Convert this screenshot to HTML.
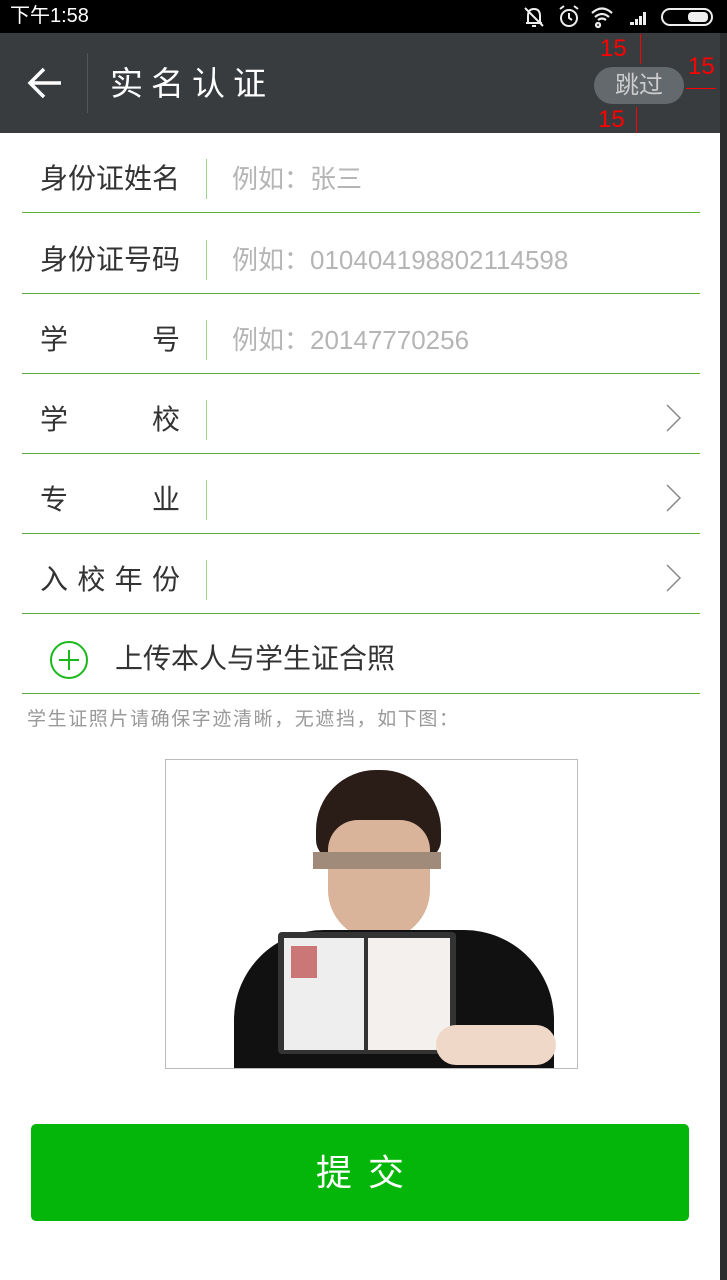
<!DOCTYPE html>
<html><head><meta charset="utf-8"><style>
*{margin:0;padding:0;box-sizing:border-box}
body{width:727px;height:1280px;background:#fff;position:relative;overflow:hidden;font-family:"Liberation Sans","Noto Sans CJK SC",sans-serif}
.abs{position:absolute}
.row{position:absolute;left:22px;width:678px;height:80px;border-bottom:1px solid #5cb03a}
.lab{position:absolute;left:18px;top:6px;line-height:80px;font-size:28px;color:#333;width:140px}
.vl{position:absolute;left:184px;top:26px;width:1px;height:40px;background:#9fd28a}
.ph{position:absolute;left:210px;top:6px;line-height:80px;font-size:26px;color:#b5b5b5}
.chev{position:absolute;right:18px;top:30px;width:16px;height:28px}
</style></head><body>
<div class="abs" style="left:0;top:0;width:727px;height:33px;background:#000"></div>
<div class="abs" style="left:10px;top:2px;color:#fff;font-size:20px;line-height:28px">下午1:58</div>
<svg class="abs" style="left:520px;top:4px" width="65" height="26"><path d="M6 19h16M8 19v-7q0-7 6-7t6 7v7M5 4l18 18M12 22h4" stroke="#eee" stroke-width="2" fill="none"/><circle cx="49" cy="14" r="8" stroke="#eee" stroke-width="2" fill="none"/><path d="M49 9v5l3 2M40 5l4-3M58 5l-4-3" stroke="#eee" stroke-width="2" fill="none"/></svg>
<svg class="abs" style="left:590px;top:5px" width="125" height="24"><path d="M8 18a2 2 0 1 0 .1 0M2 8q10-9 20 0M5 12q7-6 14 0M8 15q4-3 8 0" stroke="#eee" stroke-width="2.2" fill="none"/><path d="M40 20h4v-3h-4zM45 20h3v-6h-3zM49 20h3v-9h-3zM53 20h3v-13h-3z" fill="#eee"/><rect x="72" y="4" width="50" height="16" rx="8" fill="none" stroke="#eee" stroke-width="2"/><rect x="98" y="7" width="20" height="10" rx="4" fill="#eee"/></svg>
<div class="abs" style="left:0;top:33px;width:727px;height:100px;background:#383c3f"></div>
<svg class="abs" style="left:27px;top:66px" width="36" height="34"><path d="M3 17h31M17 3L3 17l14 14" stroke="#fff" stroke-width="3.5" fill="none"/></svg>
<div class="abs" style="left:87px;top:53px;width:1px;height:60px;background:#555"></div>
<div class="abs" style="left:110px;top:62px;color:#fff;font-size:33px;letter-spacing:8px;line-height:44px">实名认证</div>
<div class="abs" style="left:594px;top:67px;width:90px;height:37px;border-radius:19px;background:#64696d;color:#ccc;font-size:24px;text-align:center;line-height:37px">跳过</div>
<div class="abs" style="left:600px;top:34px;color:#f00;font-size:24px;line-height:30px">15</div>
<div class="abs" style="left:598px;top:105px;color:#f00;font-size:24px;line-height:30px">15</div>
<div class="abs" style="left:688px;top:52px;color:#f00;font-size:24px;line-height:30px">15</div>
<div class="abs" style="left:640px;top:34px;width:1px;height:30px;background:#f00"></div>
<div class="abs" style="left:636px;top:107px;width:1px;height:26px;background:#f00"></div>
<div class="abs" style="left:686px;top:88px;width:30px;height:1px;background:#f00"></div>
<div class="abs" style="left:720px;top:33px;width:7px;height:1247px;background:#2b2d2f"></div>

<div class="row" style="top:133px"><div class="lab">身份证姓名</div><div class="vl"></div><div class="ph">例如：张三</div></div>
<div class="row" style="top:214px"><div class="lab">身份证号码</div><div class="vl"></div><div class="ph">例如：010404198802114598</div></div>
<div class="row" style="top:294px"><div class="lab" style="text-align-last:justify">学号</div><div class="vl"></div><div class="ph">例如：20147770256</div></div>
<div class="row" style="top:374px"><div class="lab" style="text-align-last:justify">学校</div><div class="vl"></div><svg class="chev" viewBox="0 0 16 28"><path d="M1 1l13 13L1 27" stroke="#888" stroke-width="1.5" fill="none"/></svg></div>
<div class="row" style="top:454px"><div class="lab" style="text-align-last:justify">专业</div><div class="vl"></div><svg class="chev" viewBox="0 0 16 28"><path d="M1 1l13 13L1 27" stroke="#888" stroke-width="1.5" fill="none"/></svg></div>
<div class="row" style="top:534px"><div class="lab" style="text-align-last:justify">入校年份</div><div class="vl"></div><svg class="chev" viewBox="0 0 16 28"><path d="M1 1l13 13L1 27" stroke="#888" stroke-width="1.5" fill="none"/></svg></div>
<div class="row" style="top:614px"><svg class="abs" style="left:27px;top:26px" width="40" height="40"><circle cx="20" cy="20" r="18" stroke="#1bb81b" stroke-width="2" fill="none"/><path d="M20 10v20M10 20h20" stroke="#1bb81b" stroke-width="2"/></svg><div class="abs" style="left:93px;line-height:90px;top:0px;font-size:28px;color:#333">上传本人与学生证合照</div></div>
<div class="abs" style="left:27px;top:704px;font-size:19px;color:#999;letter-spacing:1.6px">学生证照片请确保字迹清晰，无遮挡，如下图：</div>

<div class="abs" style="left:165px;top:759px;width:413px;height:310px;border:1px solid #bbb;background:#fff;overflow:hidden">
<div class="abs" style="left:150px;top:10px;width:125px;height:90px;background:#2a1d17;border-radius:60px 60px 20px 20px"></div>
<div class="abs" style="left:162px;top:60px;width:102px;height:120px;background:#d9b49a;border-radius:30px 30px 50px 50px"></div>
<div class="abs" style="left:147px;top:92px;width:128px;height:17px;background:#a08a7a"></div>
<div class="abs" style="left:68px;top:170px;width:320px;height:140px;background:#111;border-radius:90px 90px 0 0"></div>
<div class="abs" style="left:112px;top:172px;width:178px;height:122px;background:#333;border-radius:4px"></div>
<div class="abs" style="left:118px;top:178px;width:80px;height:112px;background:#eee"></div>
<div class="abs" style="left:202px;top:178px;width:82px;height:112px;background:#f4f0ee"></div>
<div class="abs" style="left:125px;top:186px;width:26px;height:32px;background:#c77"></div>
<div class="abs" style="left:270px;top:265px;width:120px;height:40px;background:#f0d8c8;border-radius:20px"></div>
</div>

<div class="abs" style="left:31px;top:1124px;width:658px;height:97px;background:#05b60a;border-radius:5px;color:#fff;font-size:36px;letter-spacing:16px;text-align:center;line-height:97px;padding-left:16px">提交</div>
</body></html>
